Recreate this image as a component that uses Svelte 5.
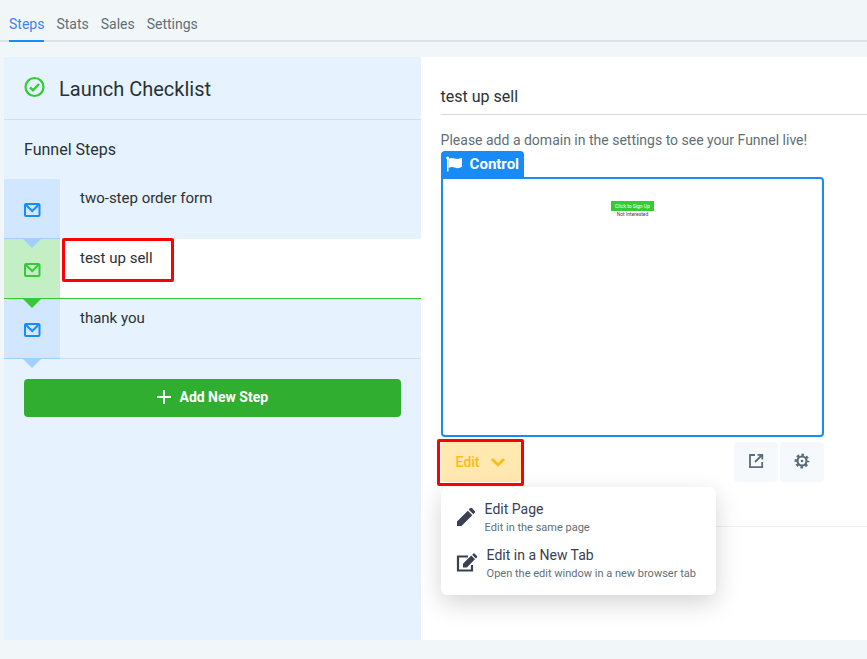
<script>
  const tabs = ["Steps", "Stats", "Sales", "Settings"];
  const steps = ["two-step order form", "test up sell", "thank you"];

  let currentTab = "Steps";
  let currentStep = 1;
  let menuOpen = true;
</script>

<nav class="tabs">
  {#each tabs as tab}
    <a
      href="#{tab.toLowerCase()}"
      class:active={currentTab === tab}
      on:click|preventDefault={() => (currentTab = tab)}>{tab}</a
    >
  {/each}
</nav>

<main>
  <aside>
    <header class="checklist">
      <svg width="22" height="22" viewBox="0 0 22 22" fill="none" stroke="#35cb35" stroke-width="2.2">
        <circle cx="10.500" cy="11" r="9" />
        <path d="M6 11.3l3 3 6-6.3" stroke-width="2.500" />
      </svg>
      <h1>Launch Checklist</h1>
    </header>
    <h2>Funnel Steps</h2>
    <ul>
      {#each steps as step, i}
        <li class:selected={currentStep === i}>
          <a href="#step-{i}" on:click|preventDefault={() => (currentStep = i)}>
            <span class="step-icon">
              <svg width="18" height="16" viewBox="0 0 18 16" fill="none" stroke="currentColor" stroke-width="2">
                <rect x="2" y="2" width="14.500" height="12" rx="1" />
                <path d="M3 3l6.200 6 6.200-6" />
              </svg>
            </span>
            <span class="step-name" class:marked={i === 1}>{step}</span>
          </a>
        </li>
      {/each}
    </ul>
    <button class="add">
      <svg width="16" height="16" viewBox="0 0 16 16" stroke="#fff" stroke-width="2">
        <path d="M8 1v14M1 8h14" />
      </svg>
      Add New Step
    </button>
  </aside>

  <section>
    <h2 class="page-title">{steps[currentStep]}</h2>
    <div class="page">
      <p class="notice">Please add a domain in the settings to see your Funnel live!</p>
      <div class="control">
        <svg width="16" height="16" viewBox="0 0 16 16" fill="#fff">
          <circle cx="1.7" cy="2" r="1.5" />
          <path d="M1 2h1.5v13.5H1z" />
          <path d="M2.5 3c2-1.3 4-1.3 6.2-.4 2 .8 4 .6 6.3-.6.5-.2 1 0 1 .6v8.2c-2.5 1.6-5 1.7-7.200.8-2.200-.8-4-.8-6.300.4z" />
        </svg>
        Control
      </div>
      <div class="preview">
        <span class="preview-button">Click to Sign Up</span>
        <span class="preview-text">Not Interested</span>
      </div>
      <div class="toolbar">
        <div class="dropdown">
          <button class="edit" aria-expanded={menuOpen} on:click={() => (menuOpen = !menuOpen)}>
            Edit
            <svg width="14" height="10" viewBox="0 0 14 10" fill="none" stroke="#ffbb10" stroke-width="2.6">
              <path d="M1 2l6 6 6-6" />
            </svg>
          </button>
          {#if menuOpen}
            <div class="menu">
              <a href="#edit">
                <svg width="20" height="20" viewBox="0 0 20 20" fill="#394052">
                  <path d="M1 19v-4.5L11.8 3.7l4.5 4.5L5.5 19z" />
                  <path d="M12.8 2.7l1.4-1.4a1.3 1.3 0 0 1 1.8 0l2.7 2.7a1.3 1.3 0 0 1 0 1.8l-1.4 1.4z" />
                </svg>
                <span class="label">Edit Page<small>Edit in the same page</small></span>
              </a>
              <a href="#edit-tab">
                <svg width="22" height="20" viewBox="0 0 22 20" fill="#394052">
                  <path d="M12 3.5H2v14h14V12" fill="none" stroke="#394052" stroke-width="2.2" />
                  <path d="M7 14.5v-3.8l8.3-8.2 3.7 3.7-8.2 8.3z" />
                  <path d="M16.2 1.7l1-1a1.1 1.1 0 0 1 1.5 0l2.2 2.2a1.1 1.1 0 0 1 0 1.5l-1 1z" />
                </svg>
                <span class="label">Edit in a New Tab<small>Open the edit window in a new browser tab</small></span>
              </a>
            </div>
          {/if}
        </div>
        <div class="actions">
          <button aria-label="Open page">
            <svg width="16" height="16" viewBox="0 0 16 16" fill="none" stroke="#5c6d76" stroke-width="1.8">
              <path d="M7 2H2v12.2h12.2V9M9.5 1.8h4.8v4.8M14 2L7 9" />
            </svg>
          </button>
          <button aria-label="Page settings">
            <svg width="16" height="16" viewBox="0 0 16 16" fill="none" stroke="#5c6d76">
              <circle cx="8" cy="8" r="4.5" stroke-width="2.2" />
              <circle cx="8" cy="8" r="6.2" stroke-width="2.4" stroke-dasharray="2.6 2.27" stroke-dashoffset="1.3" />
              <circle cx="8" cy="8" r="1.3" fill="#5c6d76" stroke="none" />
            </svg>
          </button>
        </div>
      </div>
    </div>
    <hr />
  </section>
</main>

<style>
  :global(body) {
    background-color: #f1f6f9;
    font-family: Roboto, sans-serif;
    font-size: 14px;
    color: #2a3135;
  }

  h1,
  h2,
  p,
  ul {
    margin: 0;
    padding: 0;
    font-weight: 400;
  }

  a {
    color: inherit;
    text-decoration: none;
  }

  button {
    font: inherit;
    border: none;
    border-radius: 4px;
    cursor: pointer;
  }

  svg {
    flex: none;
    display: block;
  }

  .tabs {
    display: flex;
    gap: 12px;
    padding: 0 9px;
    box-shadow: inset 0 -2px #dce2e5;
  }

  .tabs a {
    padding-top: 8px;
    height: 32px;
    line-height: 32px;
    border-bottom: 2px solid transparent;
    color: #5f6f77;
  }

  .tabs a.active {
    color: #3b82f6;
    border-color: #188bf6;
  }

  main {
    display: grid;
    grid-template-columns: 14fr 15fr;
    min-height: calc(100vh - 76px);
    margin: 15px 0 19px 4px;
    background-color: #fff;
  }

  aside {
    background-color: #e6f3ff;
  }

  .checklist {
    display: flex;
    align-items: center;
    gap: 13px;
    height: 62px;
    padding: 0 20px;
    border-bottom: 1px solid #cbe1f5;
  }

  .checklist svg {
    margin-bottom: 2px;
  }

  h1 {
    font-size: 20px;
    line-height: 24px;
    padding-top: 2px;
  }

  aside h2 {
    padding: 0 20px;
    font-size: 16px;
    line-height: 59px;
  }

  ul {
    list-style: none;
  }

  li {
    border-bottom: 1px solid #e6f3ff;
  }

  li:last-child {
    border-color: #cbe1f5;
  }

  li a {
    display: flex;
    height: 59px;
  }

  .step-icon {
    position: relative;
    display: flex;
    align-items: center;
    justify-content: center;
    width: 56px;
    padding-top: 2px;
    color: #188bf6;
    background-color: #d1e7ff;
    box-shadow: 0 1px #a1cfff;
  }

  .step-icon::after {
    content: "";
    position: absolute;
    z-index: 1;
    top: 100%;
    left: 18px;
    border: 10px solid transparent;
    border-top: 10px solid #a1cfff;
    border-bottom: none;
  }

  .step-name {
    align-self: flex-start;
    margin-left: 2px;
    padding: 7px 18px;
    font-size: 15px;
    line-height: 24px;
  }

  .marked {
    margin-top: -1px;
    padding: 5px 18px 9px 15px;
    border: 3px solid #fe0000;
    border-radius: 2px;
  }

  .selected {
    background-color: #fff;
    border-color: #35cb35;
  }

  .selected .step-icon {
    color: #35cb35;
    background-color: #c4efc5;
    box-shadow: 0 1px #35cb35;
  }

  .selected .step-icon::after {
    border-top-color: #35cb35;
  }

  .add {
    display: flex;
    align-items: center;
    justify-content: center;
    gap: 7px;
    width: calc(100% - 40px);
    height: 38px;
    margin: 20px;
    padding: 0 0 2px;
    color: #fff;
    background-color: #2fae30;
    font-weight: 700;
  }

  section {
    padding-left: 20px;
  }

  .page-title {
    padding: 27px 0 5px;
    font-size: 16px;
    line-height: 25px;
    border-bottom: 1px solid #d0d9de;
  }

  .page {
    width: 90%;
    padding-top: 15px;
  }

  .notice {
    padding-bottom: 1px;
    line-height: 20px;
    color: #5f6f77;
  }

  .control {
    display: flex;
    align-items: center;
    gap: 8px;
    width: fit-content;
    height: 26px;
    padding: 0 5px;
    color: #fff;
    background-color: #188bf6;
    border-radius: 4px 4px 0 0;
    font-size: 15px;
    font-weight: 700;
  }

  .preview {
    display: flex;
    flex-direction: column;
    align-items: center;
    height: 234px;
    padding-top: 22px;
    border: 2px solid #188bf6;
    border-radius: 0 4px 4px 4px;
  }

  .preview-button {
    padding: 0 4px;
    color: #fff;
    background-color: #35cb35;
    font-size: 5px;
    line-height: 10px;
  }

  .preview-text {
    color: #444;
    font-size: 5px;
    line-height: 6px;
  }

  .toolbar {
    display: flex;
    justify-content: space-between;
    padding-top: 5px;
  }

  .dropdown {
    position: relative;
  }

  .edit {
    position: relative;
    display: flex;
    align-items: center;
    gap: 11px;
    height: 40px;
    padding: 0 16px 0 15px;
    color: #ffbb10;
    background-color: #ffe9b0;
    font-weight: 500;
  }

  .edit::after {
    content: "";
    position: absolute;
    z-index: 2;
    inset: -3px -3px -4px -4px;
    border: 3px solid #fe0000;
    border-radius: 2px;
  }

  .menu {
    position: absolute;
    top: 45px;
    left: 0;
    min-width: 244px;
    padding: 10px 16px 6px 15px;
    background-color: #fff;
    border-radius: 6px;
    box-shadow: 0 8px 24px rgba(0, 0, 0, 0.17);
  }

  .menu a {
    display: flex;
    align-items: center;
    gap: 9px;
    height: 40px;
    padding-bottom: 6px;
    color: #394052;
    white-space: nowrap;
  }

  .label {
    padding-top: 2px;
    line-height: 20px;
  }

  small {
    display: block;
    font-size: 11px;
    line-height: 18px;
    color: #5f6f77;
  }

  .actions {
    display: flex;
    gap: 2px;
  }

  .actions button {
    display: flex;
    align-items: center;
    justify-content: center;
    width: 44px;
    height: 40px;
    padding: 0 0 2px;
    background-color: #f5f9fc;
  }

  hr {
    margin: 44px 0 0;
    border: none;
    border-top: 1px solid #edf1f2;
  }
</style>
